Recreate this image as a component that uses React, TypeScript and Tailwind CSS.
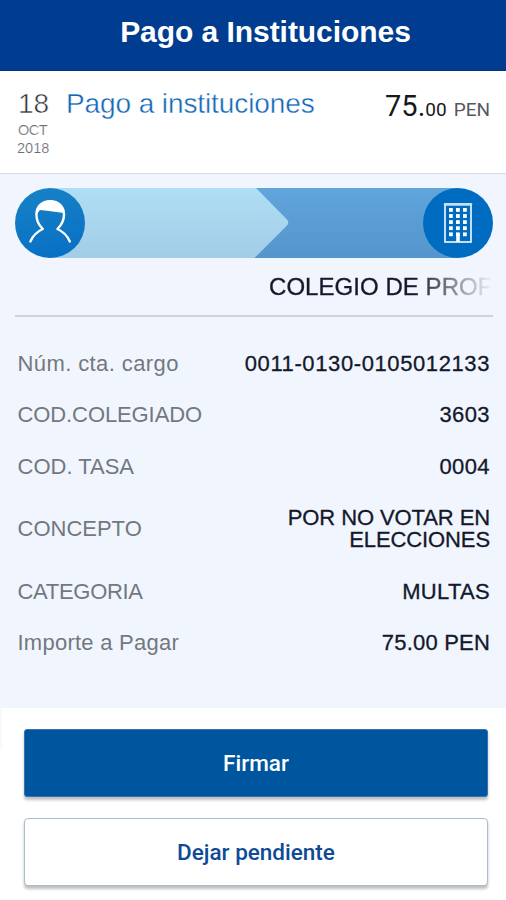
import clsx from "clsx";

interface Detail {
  label: string;
  value: string;
  labelClass?: string;
  valueClass?: string;
}

const details: Detail[] = [
  { label: "Núm. cta. cargo", value: "0011-0130-0105012133", labelClass: "tracking-[0.4px]", valueClass: "tracking-[0.6px]" },
  { label: "COD.COLEGIADO", value: "3603", labelClass: "tracking-[-0.1px]", valueClass: "tracking-[0.4px]" },
  { label: "COD. TASA", value: "0004", valueClass: "tracking-[0.4px]" },
  { label: "CONCEPTO", value: "POR NO VOTAR EN ELECCIONES", valueClass: "tracking-[-0.1px]" },
  { label: "CATEGORIA", value: "MULTAS", labelClass: "tracking-[-0.3px]", valueClass: "tracking-[0.3px]" },
  { label: "Importe a Pagar", value: "75.00 PEN", labelClass: "tracking-[0.25px]", valueClass: "tracking-[0.2px]" },
];

const windowRows = [0, 1, 2, 3, 4];
const windowCols = [0, 1, 2];

function PersonIcon() {
  return (
    <svg width="70" height="70" viewBox="0 0 70 70" fill="none">
      <defs>
        <linearGradient id="person-bg" x1="0.4" y1="0" x2="0.6" y2="1">
          <stop offset="0" stopColor="#1681c6" />
          <stop offset="1" stopColor="#0870c5" />
        </linearGradient>
      </defs>
      <circle cx="35" cy="35" r="35" fill="url(#person-bg)" />
      <path
        d="M15.400 53.400C18 47.500 22 43.600 27.800 41C23.200 36.500 21.400 32 21.400 26.500C21.400 18.500 27 13.200 35.200 13.200C43.400 13.200 49 18.500 49 26.500C49 32 47 36.500 42.400 41C48.200 43.600 52.200 47.500 54.800 53.400"
        stroke="white"
        strokeWidth="2.4"
        strokeLinecap="round"
        strokeLinejoin="round"
      />
      <path d="M21.500 27L24.800 22L32 22.800L48.800 25C48.300 17.500 43 12.600 35.200 12.600C27 12.600 22 17.500 21.500 27Z" fill="white" />
    </svg>
  );
}

function BuildingIcon() {
  return (
    <svg width="70" height="70" viewBox="0 0 70 70" fill="none">
      <circle cx="35" cy="35" r="35" fill="#006cc1" />
      <rect x="22" y="16.500" width="26" height="37.500" stroke="#dcecfa" strokeWidth="1.8" />
      <path d="M22 16.200H48" stroke="#c5dff5" strokeWidth="2.400" strokeLinecap="round" />
      {windowRows.map((row) =>
        windowCols.map((col) => (
          <rect
            key={`${row}-${col}`}
            x={26 + col * 7}
            y={20 + row * 6.1}
            width="3.8"
            height="3.8"
            fill="white"
          />
        ))
      )}
      <path d="M33.200 45.500H36.800V54H33.200Z" fill="white" />
    </svg>
  );
}

function TransferBar() {
  return (
    <div className="grid h-[70px] rounded-full *:[grid-area:1/1]">
      <svg width="478" height="70" viewBox="0 0 478 70">
        <defs>
          <linearGradient id="bar-from" x1="0" y1="0" x2="0" y2="1">
            <stop offset="0" stopColor="#afdff4" />
            <stop offset="1" stopColor="#a3cce7" />
          </linearGradient>
          <linearGradient id="bar-to" x1="0" y1="0" x2="0" y2="1">
            <stop offset="0" stopColor="#60a5db" />
            <stop offset="1" stopColor="#5495cd" />
          </linearGradient>
        </defs>
        <path d="M238 0H443V70H238Z" fill="url(#bar-to)" />
        <path d="M35 0H241L272 31.500Q274.500 34.500 272 37.500L239.500 70H35Z" fill="url(#bar-from)" />
      </svg>
      <div className="flex justify-between">
        <PersonIcon />
        <BuildingIcon />
      </div>
    </div>
  );
}

export default function App() {
  return (
    <div className="flex h-[900px] w-[506px] flex-col overflow-hidden bg-white font-['Liberation_Sans',Arial,sans-serif]">
      {/* Header */}
      <header className="flex h-[71px] shrink-0 justify-center border-b border-[#0b2b80] bg-[#003c8f] pt-[15px] pl-[25px]">
        <h1 className="text-[30px] leading-[34px] font-bold tracking-[-0.05px] whitespace-nowrap text-white">
          Pago a Instituciones
        </h1>
      </header>

      {/* Summary */}
      <section className="flex h-[103px] shrink-0 border-b border-[#d5dbe1] bg-white pr-[16px] pl-[17px]">
        <div className="w-[49px] pt-[17px] text-[#6b6f76]">
          <div className="pl-px text-[28px] leading-[32px] text-[#33363c] [-webkit-text-stroke:0.5px_white]">18</div>
          <div className="mt-px pl-px text-[14.5px] leading-[18px] tracking-[-0.5px] [-webkit-text-stroke:0.2px_white]">OCT</div>
          <div className="text-[14.5px] leading-[18px] [-webkit-text-stroke:0.2px_white]">2018</div>
        </div>
        <h2 className="pt-[17px] text-[28px] leading-[32px] tracking-[-0.1px] whitespace-nowrap text-[#1268b8] [-webkit-text-stroke:0.4px_white]">
          Pago a instituciones
        </h2>
        <div className="ml-auto pt-[17px] font-[Roboto,sans-serif] text-[29px] leading-[36px] whitespace-nowrap text-[#16181c]">
          75.<span className="text-[19px]">00</span>
          <span className="ml-[7px] text-[19px] text-[#55585e]">PEN</span>
        </div>
      </section>

      {/* Operation */}
      <section className="flex h-[534px] shrink-0 flex-col bg-[#f1f6fe] pr-[13.5px] pl-[14.5px] pt-[14px]">
        <TransferBar />
        <div className="flex h-[59px] justify-end border-b-2 border-[#cfd4d9] pt-[15px]">
          <div className="w-[223.5px] overflow-hidden bg-linear-to-r from-[#14182a] from-[64%] via-[#909398] via-[84%] to-[#f1f6fe] to-[100%] bg-clip-text text-[24px] leading-[28px] tracking-[0.05px] whitespace-nowrap text-transparent [-webkit-text-stroke:0.35px_transparent]">
            COLEGIO DE PROF
          </div>
        </div>
        <dl className="flex flex-col pt-[21px] pr-[2.5px] pl-[3px] text-[22px] leading-[22px]">
          {details.map((item) => (
            <div key={item.label} className="flex items-center justify-between py-[14.75px]">
              <dt className={clsx("text-[#73787f]", item.labelClass)}>{item.label}</dt>
              <dd
                className={clsx(
                  "max-w-[250px] text-right text-[#14182a] [-webkit-text-stroke:0.3px_#14182a]",
                  item.valueClass
                )}
              >
                {item.value}
              </dd>
            </div>
          ))}
        </dl>
      </section>

      {/* Actions */}
      <section className="flex flex-1">
        <div className="h-[42px] w-[2px] bg-[#f7f9fb]" />
        <div className="flex flex-1 flex-col gap-[21px] pt-[21px] pr-[18px] pl-[22px] font-[Roboto,sans-serif] text-[22.5px] font-medium">
          <button className="h-[68px] rounded-[3px] border border-[#3b6fae] bg-[#00559f] pt-[2px] text-white shadow-[0_3px_3px_rgba(0,0,0,0.25)]">
            Firmar
          </button>
          <button className="h-[68px] rounded-[4px] border-[1.5px] border-[#a9bccb] bg-white pt-[2px] text-[#0f4a95] shadow-[0_3px_3px_rgba(0,0,0,0.25)]">
            Dejar pendiente
          </button>
        </div>
      </section>
    </div>
  );
}
